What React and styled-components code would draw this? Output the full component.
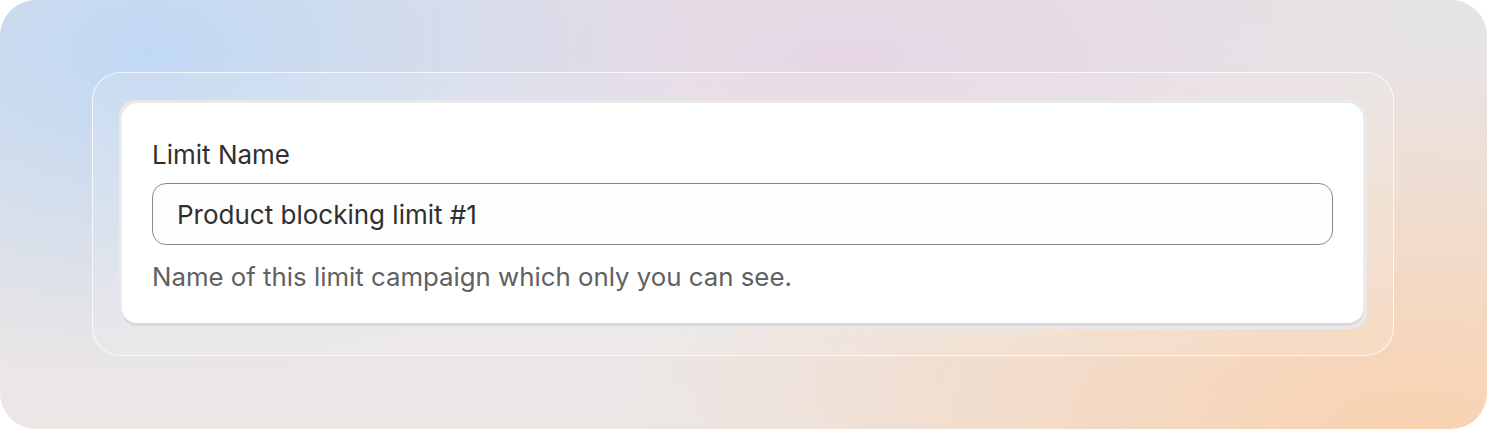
import React from 'react'
import styled, { createGlobalStyle } from 'styled-components'

const GlobalStyle = createGlobalStyle`
    body {
        margin: 0;
        background: #ffffff;
        font-family: Inter, "Noto Sans", sans-serif;
        -webkit-font-smoothing: antialiased;
    }
`

const Canvas = styled.div`
    width: 1487px;
    height: 429px;
    box-sizing: border-box;
    padding: 72px 93px 73px 92px;
    border-radius: 36px;
    overflow: hidden;
    background:
        radial-gradient(ellipse 560px 330px at 10% 12%, rgba(192, 216, 243, 1), rgba(192, 216, 243, 0) 100%),
        radial-gradient(ellipse 560px 220px at 57% 14%, rgba(230, 212, 228, 0.85), rgba(230, 212, 228, 0) 100%),
        radial-gradient(ellipse 780px 380px at 95% 100%, rgba(249, 210, 176, 1), rgba(249, 210, 176, 0) 100%),
        linear-gradient(180deg, #e6e3e6 0%, #ece7e5 100%);
`

const Frame = styled.div`
    height: 100%;
    box-sizing: border-box;
    padding: 27px 26px 26px 26px;
    border: 1.5px solid rgba(255, 255, 255, 0.75);
    border-radius: 28px;
    background: rgba(255, 255, 255, 0.12);
`

const Tray = styled.div`
    padding: 3px 3px 4px 2px;
    border-radius: 16px;
    background: #e9e9e9;
`

const Card = styled.div`
    display: flex;
    flex-direction: column;
    padding: 37px 31px 33px 31px;
    border-radius: 16px;
    background: #ffffff;
    box-shadow:
        0 1px 0 rgba(0, 0, 0, 0.06),
        inset 0 -2px 0 #d8d8d8,
        inset 1px 0 0 rgba(0, 0, 0, 0.06),
        inset -1px 0 0 rgba(0, 0, 0, 0.06);
`

const Label = styled.label`
    font-size: 26px;
    line-height: 30px;
    color: #303030;
`

const Input = styled.input`
    margin-top: 13px;
    height: 62px;
    box-sizing: border-box;
    padding: 0 24px;
    border: 1px solid #8a8a8a;
    border-radius: 14px;
    background: #fdfdfd;
    font-family: inherit;
    font-size: 26px;
    color: #303030;
    outline: none;
`

const HelpText = styled.p`
    margin: 17px 0 0;
    font-size: 25.8px;
    line-height: 30px;
    color: #616161;
`

const App = () => {
    return (
        <>
            <GlobalStyle />
            <Canvas>
                <Frame>
                    <Tray>
                        <Card>
                            <Label htmlFor="limit-name">Limit Name</Label>
                            <Input id="limit-name" defaultValue="Product blocking limit #1" />
                            <HelpText>Name of this limit campaign which only you can see.</HelpText>
                        </Card>
                    </Tray>
                </Frame>
            </Canvas>
        </>
    )
}

export default App
